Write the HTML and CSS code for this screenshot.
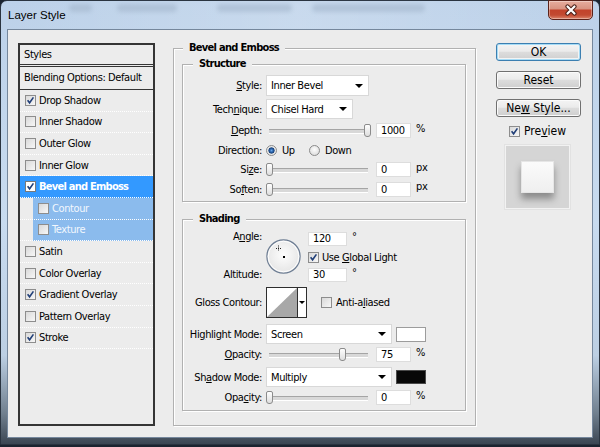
FILE: index.html
```html
<!DOCTYPE html>
<html lang="en">
<head>
<meta charset="utf-8">
<title>Layer Style</title>
<link rel="stylesheet" href="styles.css">
</head>
<body>
<div class="window">
  <div class="titlebar">
    <span class="title">Layer Style</span>
    <div class="glass" aria-hidden="true">
      <span class="blob b1"></span><span class="blob b2"></span><span class="blob b3"></span><span class="blob b4"></span>
    </div>
    <button class="close" type="button" aria-label="Close">
      <svg width="16" height="12" viewBox="0 0 16 12"><path d="M4.5 2.5 L11.5 9.5 M11.5 2.5 L4.5 9.5" stroke="#4a1f17" stroke-width="4.2" stroke-linecap="round"/><path d="M4.5 2.5 L11.5 9.5 M11.5 2.5 L4.5 9.5" stroke="#ffffff" stroke-width="2.2" stroke-linecap="round"/></svg>
    </button>
  </div>

  <div class="client">
    <div class="styles-panel">
      <div class="sp-head">Styles</div>
      <div class="sp-blend">Blending Options: Default</div>
      <ul class="sp-list">
        <li><span class="cb on"><svg viewBox="0 0 9 9" width="9" height="9"><path d="M1.6 4.2 L3.6 6.8 L7.4 1.4" fill="none" stroke="#213f78" stroke-width="1.6"/></svg></span>Drop Shadow</li>
        <li><span class="cb"></span>Inner Shadow</li>
        <li><span class="cb"></span>Outer Glow</li>
        <li><span class="cb"></span>Inner Glow</li>
        <li class="sel"><span class="cb on white"><svg viewBox="0 0 9 9" width="9" height="9"><path d="M1.6 4.2 L3.6 6.8 L7.4 1.4" fill="none" stroke="#213f78" stroke-width="1.6"/></svg></span>Bevel and Emboss</li>
        <li class="sub"><span class="cb"></span>Contour</li>
        <li class="sub"><span class="cb"></span>Texture</li>
        <li><span class="cb"></span>Satin</li>
        <li><span class="cb"></span>Color Overlay</li>
        <li><span class="cb on"><svg viewBox="0 0 9 9" width="9" height="9"><path d="M1.6 4.2 L3.6 6.8 L7.4 1.4" fill="none" stroke="#213f78" stroke-width="1.6"/></svg></span>Gradient Overlay</li>
        <li><span class="cb"></span>Pattern Overlay</li>
        <li><span class="cb on"><svg viewBox="0 0 9 9" width="9" height="9"><path d="M1.6 4.2 L3.6 6.8 L7.4 1.4" fill="none" stroke="#213f78" stroke-width="1.6"/></svg></span>Stroke</li>
      </ul>
    </div>

    <fieldset class="main">
      <legend>Bevel and Emboss</legend>

      <fieldset class="group structure">
        <legend>Structure</legend>
        <div class="row r-style">
          <span class="lbl"><u>S</u>tyle:</span>
          <span class="select w103"><span>Inner Bevel</span><i class="arrow"></i></span>
        </div>
        <div class="row r-tech">
          <span class="lbl">Tech<u>n</u>ique:</span>
          <span class="select w87"><span>Chisel Hard</span><i class="arrow"></i></span>
        </div>
        <div class="row r-depth">
          <span class="lbl"><u>D</u>epth:</span>
          <span class="slider"><span class="thumb" style="left:98px"></span></span>
          <span class="field">1000</span><span class="unit">%</span>
        </div>
        <div class="row r-dir">
          <span class="lbl">Direction:</span>
          <span class="radio on"></span><span class="rtext up">Up</span>
          <span class="radio"></span><span class="rtext">Down</span>
        </div>
        <div class="row r-size">
          <span class="lbl">Si<u>z</u>e:</span>
          <span class="slider"><span class="thumb" style="left:0px"></span></span>
          <span class="field">0</span><span class="unit">px</span>
        </div>
        <div class="row r-soft">
          <span class="lbl">So<u>f</u>ten:</span>
          <span class="slider"><span class="thumb" style="left:0px"></span></span>
          <span class="field">0</span><span class="unit">px</span>
        </div>
      </fieldset>

      <fieldset class="group shading">
        <legend>Shading</legend>
        <div class="row r-angle">
          <div class="lbl lblcol"><span class="a-top">A<u>n</u>gle:</span><span>Altitude:</span></div>
          <svg class="dial" width="35" height="35" viewBox="0 0 35 35">
            <defs><radialGradient id="dg" cx="50%" cy="45%" r="60%"><stop offset="0" stop-color="#fdfdfd"/><stop offset="1" stop-color="#e3e3e3"/></radialGradient></defs>
            <circle cx="17.5" cy="17.5" r="16.6" fill="url(#dg)" stroke="#6d7d93" stroke-width="1.2"/>
            <circle cx="17.5" cy="17.5" r="15.3" fill="none" stroke="#ffffff" stroke-width="1"/>
            <rect x="17" y="17" width="2" height="2" fill="#000"/>
            <path d="M12.5 6.5v5M10 9.5h5" stroke="#222" stroke-width="1" stroke-dasharray="1 1"/>
          </svg>
          <div class="anglecol">
            <div class="aline"><span class="field w39">120</span><span class="deg">°</span></div>
            <div class="aline gl"><span class="cb on"><svg viewBox="0 0 9 9" width="9" height="9"><path d="M1.6 4.2 L3.6 6.8 L7.4 1.4" fill="none" stroke="#213f78" stroke-width="1.6"/></svg></span><span class="ctext">Use <u>G</u>lobal Light</span></div>
            <div class="aline alt"><span class="field w39">30</span><span class="deg">°</span></div>
          </div>
        </div>
        <div class="row r-gloss">
          <span class="lbl">Gloss Contour:</span>
          <span class="contour">
            <svg width="30" height="29" viewBox="0 0 30 29"><rect width="30" height="29" fill="#fff"/><polygon points="0,29 30,0 30,29" fill="#a8a8a8"/></svg>
            <span class="cdrop"><i class="arrow small"></i></span>
          </span>
          <span class="cb aa"></span><span class="ctext">Anti-a<u>l</u>iased</span>
        </div>
        <div class="row r-hl">
          <span class="lbl">Hi<u>g</u>hlight Mode:</span>
          <span class="select w126"><span>Screen</span><i class="arrow"></i></span>
          <span class="swatch"></span>
        </div>
        <div class="row r-op1">
          <span class="lbl"><u>O</u>pacity:</span>
          <span class="slider"><span class="thumb" style="left:73px"></span></span>
          <span class="field">75</span><span class="unit">%</span>
        </div>
        <div class="row r-sh">
          <span class="lbl">Sh<u>a</u>dow Mode:</span>
          <span class="select w126"><span>Multiply</span><i class="arrow"></i></span>
          <span class="swatch black"></span>
        </div>
        <div class="row r-op2">
          <span class="lbl">Opa<u>c</u>ity:</span>
          <span class="slider"><span class="thumb" style="left:0px"></span></span>
          <span class="field">0</span><span class="unit">%</span>
        </div>
      </fieldset>
    </fieldset>

    <div class="side">
      <button class="btn default" type="button">OK</button>
      <button class="btn" type="button">Reset</button>
      <button class="btn" type="button">Ne<u>w</u> Style...</button>
      <div class="pv-row"><span class="cb on"><svg viewBox="0 0 9 9" width="9" height="9"><path d="M1.6 4.2 L3.6 6.8 L7.4 1.4" fill="none" stroke="#213f78" stroke-width="1.6"/></svg></span><span class="pv-text">Pre<u>v</u>iew</span></div>
      <div class="pv-box"><div class="pv-square"></div></div>
    </div>
  </div>
</div>
</body>
</html>
```
FILE: styles.css
```css
* { box-sizing: border-box; }
html, body { margin: 0; padding: 0; }
body {
  width: 600px;
  height: 447px;
  overflow: hidden;
  background: #1b2430;
  font-family: "DejaVu Sans Condensed", "DejaVu Sans", sans-serif;
  font-size: 11px;
  line-height: 13px;
  letter-spacing: -0.4px;
  color: #000;
}
u { text-decoration: underline; text-underline-offset: 1px; }

/* window frame */
.window {
  width: 600px;
  height: 445px;
  display: flex;
  flex-direction: column;
  border: 1px solid #2a3440;
  border-radius: 7px 7px 0 0;
  padding: 0 6px 6px;
  background: linear-gradient(to bottom, #bcd1e9 0, #c8dbef 50%, #bccfe3 80%, #71808f 93%, #3b4653 100%);
}
.titlebar {
  height: 28px;
  flex: none;
  display: flex;
  align-items: flex-start;
  background: linear-gradient(to right, rgba(255,255,255,0) 0, rgba(255,255,255,.18) 50%, rgba(255,255,255,0) 100%);
}
.title {
  font-family: "Liberation Sans", Arial, sans-serif;
  font-size: 11.5px;
  line-height: 14px;
  letter-spacing: 0;
  margin: 7px 0 0 1px;
  white-space: nowrap;
}
.glass { display: flex; margin: 3px 0 0 3px; }
.blob {
  height: 8px;
  border-radius: 4px;
  background: #a3b6cc;
  filter: blur(2px);
  opacity: .6;
}
.b1 { width: 23px; }
.b2 { width: 60px; margin-left: 25px; }
.b3 { width: 75px; margin-left: 40px; }
.b4 { width: 113px; margin-left: 20px; }
.close {
  margin: -1px 0 0 auto;
  width: 45px;
  height: 20px;
  padding: 0;
  display: flex;
  align-items: center;
  justify-content: center;
  border: 1px solid #5b2219;
  border-radius: 0 0 5px 5px;
  background: linear-gradient(#e7ad9e 0, #d99482 42%, #c2432b 52%, #c24a31 78%, #dc856b 100%);
  box-shadow: inset 0 0 0 1px rgba(255,255,255,.35);
}

/* client area */
.client {
  flex: 1;
  display: flex;
  background: #ececec;
  border: 1px solid #75879c;
  padding: 13px 10px 11px 10px;
}

/* styles list */
.styles-panel {
  width: 137px;
  flex: none;
  display: flex;
  flex-direction: column;
  border: 2px solid #353535;
  background: #ececec;
}
.sp-head {
  height: 22px;
  line-height: 19px;
  padding-left: 4px;
  border-bottom: 3px double #353535;
}
.sp-blend {
  height: 23px;
  line-height: 22px;
  padding-left: 4px;
  border-bottom: 1px solid #353535;
  white-space: nowrap;
}
.sp-list { list-style: none; margin: 0; padding: 0; }
.sp-list li {
  height: 21.6px;
  display: flex;
  align-items: center;
  padding-left: 5px;
  border-bottom: 1px dotted #ffffff;
  white-space: nowrap;
}
.sp-list li .cb { margin-right: 3px; }
.sp-list li.sel { background: #3399ff; color: #fff; font-weight: bold; letter-spacing: -0.75px; }
.sp-list li.sub {
  padding-left: 18px;
  color: #f2f7fd;
  background: linear-gradient(to right, transparent 13px, #8bbbed 13px);
}

/* checkbox & radio */
.cb {
  width: 11px;
  height: 11px;
  flex: none;
  display: inline-flex;
  border: 1px solid #8d8d8d;
  background: linear-gradient(135deg, #d9d9d9, #f7f7f7);
}
.cb svg { display: block; }
.cb.white { background: #fff; border-color: #7a7a7a; }
.radio {
  width: 11px;
  height: 11px;
  flex: none;
  border-radius: 50%;
  border: 1px solid #8a8a8a;
  background: radial-gradient(circle at 50% 40%, #fdfdfd, #d6d6d6);
}
.radio.on {
  background: radial-gradient(circle at 50% 50%, #6aa6e6 0, #2a64ad 1.6px, #163f77 2.8px, #e4e4e4 3.4px, #f8f8f8 100%);
}

/* fieldsets */
fieldset {
  margin: 0;
  min-width: 0;
  padding: 0;
  border: 1px solid #b1b1b1;
  box-shadow: inset 1px 1px 0 #fff, 1px 1px 0 #fff;
}
legend {
  font-weight: bold;
  line-height: 12px;
  letter-spacing: -0.7px;
  padding: 0 6px;
  background: #ececec;
  white-space: nowrap;
}
.main {
  width: 303px;
  flex: none;
  margin: -1px 0 0 18px;
  padding: 4px 9px 0 8px;
}
.main > legend { margin-left: 1px; }
.group { padding: 5px 0 4px; }
.group > legend { margin-left: 10px; }
.shading { margin-top: 11px; padding: 7px 0 5px; }

/* rows */
.row { display: flex; align-items: center; white-space: nowrap; }
.lbl { width: 79px; margin-right: 4px; text-align: right; flex: none; }
.r-style { height: 21px; }
.r-tech { height: 20px; margin-top: 3px; }
.r-depth { height: 15px; margin-top: 4px; }
.r-dir { height: 14px; margin-top: 5px; }
.r-size { height: 15px; margin-top: 5px; }
.r-soft { height: 16px; margin-top: 4px; }
.r-angle { height: 49px; align-items: flex-start; }
.r-gloss { height: 31px; margin-top: 6px; }
.r-hl { height: 20px; margin-top: 6px; }
.r-op1 { height: 15px; margin-top: 3px; }
.r-sh { height: 20px; margin-top: 5px; }
.r-op2 { height: 15px; margin-top: 3px; }

.select {
  height: 100%;
  display: flex;
  align-items: center;
  justify-content: space-between;
  background: #fff;
  border: 1px solid #d8d8d8;
  padding: 0 5px 0 4px;
  flex: none;
}
.w103 { width: 103px; }
.w87 { width: 87px; }
.w126 { width: 126px; }
.arrow {
  width: 0;
  height: 0;
  border-left: 4px solid transparent;
  border-right: 4px solid transparent;
  border-top: 4px solid #000;
}
.arrow.small { border-left-width: 3px; border-right-width: 3px; border-top-width: 3px; }

.field {
  width: 35px;
  height: 15px;
  flex: none;
  background: #fff;
  border: 1px solid #dddddd;
  padding-left: 4px;
  line-height: 13px;
}
.field.w39 { width: 39px; height: 14px; line-height: 12px; }
.unit { margin-left: 5px; align-self: flex-start; line-height: 11px; }

.slider { position: relative; width: 104px; height: 15px; margin-right: 6px; flex: none; }
.slider::before {
  content: "";
  position: absolute;
  left: 3px;
  right: 2px;
  top: 6px;
  height: 3px;
  border-top: 1px solid #a5a5a5;
  border-bottom: 1px solid #ffffff;
  background: #d8d8d8;
}
.thumb {
  position: absolute;
  top: 1px;
  width: 7px;
  height: 13px;
  border: 1px solid #8b8b8b;
  border-radius: 2px 2px 3px 3px;
  background: linear-gradient(#fefefe, #dedede);
}

.rtext { margin-left: 5px; }
.rtext.up { width: 27px; }

/* angle block */
.lblcol { height: 49px; display: flex; flex-direction: column; justify-content: space-between; align-items: flex-end; }
.a-top { margin-top: -2px; }
.dial { margin-top: 7px; flex: none; display: block; }
.anglecol { margin-left: 7px; display: flex; flex-direction: column; }
.aline { display: flex; align-items: flex-start; }
.aline.gl { margin-top: 6px; align-items: center; height: 11px; }
.aline.alt { margin-top: 5px; }
.deg { margin-left: 5px; line-height: 10px; }
.ctext { margin-left: 3px; }

.contour {
  width: 41px;
  height: 31px;
  flex: none;
  display: flex;
  border: 1px solid #2e2e2e;
  background: #fff;
}
.contour svg { display: block; }
.cdrop {
  flex: 1;
  display: flex;
  align-items: center;
  justify-content: center;
  border-left: 1px solid #2e2e2e;
}
.cb.aa { margin-left: 14px; }
.r-gloss .ctext { margin-left: 4px; }

.swatch {
  width: 30px;
  height: 15px;
  margin-left: 4px;
  flex: none;
  background: #fff;
  border: 1px solid #9c9c9c;
}
.swatch.black { height: 14px; background: #080808; border-color: #4a4a4a; }

/* right column */
.side { width: 85px; flex: none; margin-left: 20px; display: flex; flex-direction: column; }
.btn {
  display: block;
  width: 85px;
  height: 18px;
  margin: 10px 0 0;
  padding: 0;
  border: 1px solid #707070;
  border-radius: 3px;
  background: linear-gradient(#f4f4f4 0, #ebebeb 45%, #dcdcdc 52%, #cfcfcf 100%);
  box-shadow: inset 0 0 0 1px #fbfbfb;
  font-family: "DejaVu Sans Condensed", "DejaVu Sans", sans-serif;
  font-size: 12px;
  line-height: 15px;
  letter-spacing: 0;
  color: #000;
}
.btn.default {
  margin-top: 0;
  border-color: #3c7fb1;
  box-shadow: inset 0 0 0 1px #a6dcf6, inset 0 0 0 2px #f3f3f3;
}
.pv-row { display: flex; align-items: center; height: 11px; margin: 9px 0 0 13px; }
.pv-text { margin-left: 4px; font-size: 12px; letter-spacing: 0; }
.pv-box {
  width: 65px;
  height: 64px;
  margin: 8px 0 0 9px;
  display: flex;
  align-items: center;
  justify-content: center;
  background: #d5d5d5;
  border: 1px solid #f2f2f2;
  box-shadow: 0 0 0 1px #e2e2e2;
}
.pv-square {
  width: 33px;
  height: 32px;
  background: linear-gradient(#fbfbfb, #efefef);
  border: 1px solid #e6e6e6;
  box-shadow: 0 6px 7px rgba(0,0,0,.35);
}
```
